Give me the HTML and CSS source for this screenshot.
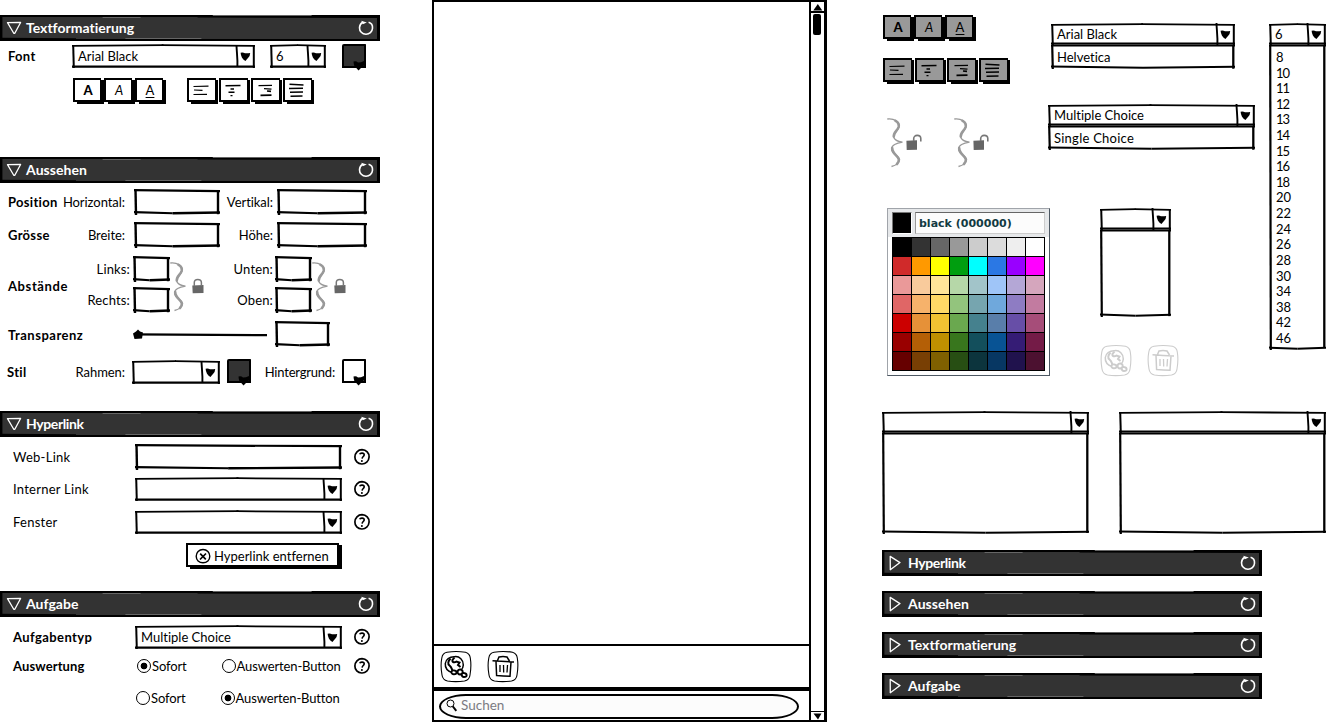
FILE: index.html
```html
<!DOCTYPE html>
<html lang="de">
<head>
<meta charset="utf-8">
<title>Textformatierung</title>
<link rel="stylesheet" href="styles.css">
</head>
<body>
<svg class="defs" aria-hidden="true">
  <symbol id="reload" viewBox="0 0 18 18"><path d="M11.600 3.300C14.200 4 15.700 6.500 15.500 9.300C15.300 12.900 12.300 15.400 8.900 15.300C5.200 15.200 2.400 12.300 2.500 8.700C2.600 6.200 3.900 4.300 5.800 3.300" fill="none" stroke="#fff" stroke-width="1.600"/><path d="M4.300 1.700L9.800 3.400L5.800 5.200Z" fill="#fff"/></symbol>
  <symbol id="open" viewBox="0 0 16 14"><path d="M1.500 1.600L14.600 1.500L8.800 12.200Q8.200 12.600 7.600 12Z" fill="none" stroke="#fff" stroke-width="1.300" stroke-linejoin="round"/></symbol>
  <symbol id="closed" viewBox="0 0 14 16"><path d="M2.200 1.400L12 7.600L2.300 14.700Z" fill="none" stroke="#fff" stroke-width="1.300" stroke-linejoin="round"/></symbol>
  <symbol id="drop" viewBox="0 0 20 24"><path d="M1.500 1C1.600 8 2.800 14 2.400 23" stroke="#000" stroke-width="1.900" fill="none"/><path d="M5.600 8.800Q8 8.300 10 9.200Q12.500 9.400 15.200 8.900Q15 12.200 13.200 13.800Q11.500 15.500 10.500 17Q8.500 16 7 13.800Q5.800 11.500 5.600 8.800Z"/></symbol>
  <symbol id="swatch-tip" viewBox="0 0 26 27"><path d="M11.500 17.500Q14 16.500 16 18.500Q19 18.500 22 17V21.500Q19.500 22.500 18.500 24.500L16.500 26.500L14.300 24Q11.800 23 11.500 17.500Z"/></symbol>
  <symbol id="help" viewBox="0 0 18 18"><path d="M9 1.700C13.200 1.800 16.300 4.800 16.100 9C15.800 13.200 12.600 16.200 8.700 16C4.700 15.900 1.800 12.900 1.900 8.900C2 4.900 5 1.700 9 1.700Z" fill="none" stroke="#000" stroke-width="1.700"/><path d="M6.700 6.300C7.300 4.600 11.200 4.600 11.200 6.800C11.200 8.500 9.300 8.600 9.100 10.700" fill="none" stroke="#000" stroke-width="1.600"/><circle cx="8.900" cy="12.900" r="1"/></symbol>
  <symbol id="remove" viewBox="0 0 18 18"><path d="M9 2.500C13 2.500 15.800 5.500 15.800 9.300C15.800 13 13 15.800 9 15.800C5 15.800 2.200 13 2.200 9.300C2.200 5.500 5 2.500 9 2.500Z" fill="none" stroke="#000" stroke-width="1.400"/><path d="M6.200 6.700L11.800 12.300M12 6.500L6 12.500" stroke="#000" stroke-width="1.700"/></symbol>
  <symbol id="brace" viewBox="0 0 16 50"><path d="M.3 1C7 .2 12.700 3.500 12 9C11 13 5.800 15 6.700 19C7.500 22.500 11 23.700 15.500 24.100C10 25 3.700 27 4.700 32C5.700 36 12.500 38 12.500 42C12 45.500 8.500 47.500 4.500 48.500" fill="none" stroke="#999" stroke-width="1.300"/><path d="M8.500 2.800C11 4 12.200 6.500 11.600 9C10.600 12.500 6.300 14.500 6.800 18.500M5.200 30C4.800 35.500 11 37.500 11.900 41.500C11.900 43.500 11 45 10 46" fill="none" stroke="#999" stroke-width="2.600" stroke-linecap="round"/></symbol>
  <symbol id="lock" viewBox="0 0 12 16"><path d="M.3 7.500L11.500 7V15L.7 15.300Z" fill="#666"/><path d="M2.300 8V4.500C2.300 .4 9.400 .4 9.400 4.500V8" fill="none" stroke="#777" stroke-width="1.500"/></symbol>
  <symbol id="unlock" viewBox="0 0 16 17"><path d="M.4 6.700L11 6.300V15.700L.7 16Z" fill="#666"/><path d="M7.700 7V4.800C7.500 .3 14.700 .3 14.800 4.600V7.500" fill="none" stroke="#777" stroke-width="1.600"/></symbol>
  <symbol id="left" viewBox="0 0 28 24"><path d="M6.500 8.500L21.500 8.200M7 12L15.500 12.300M6.500 16.500L20 16.300" stroke="#000" stroke-width="1.200"/></symbol>
  <symbol id="center" viewBox="0 0 28 24"><path d="M6.500 7.700L21.500 7.500M11.500 11L15 11M9.500 14.300L15.500 14.300M11.500 17.600L13.500 17.600" stroke="#000" stroke-width="1.400"/></symbol>
  <symbol id="right" viewBox="0 0 28 24"><path d="M7.500 7.600L21 7.300M13 10.600L20.500 11.200" stroke="#000" stroke-width="1.200"/><path d="M16 13L20 13.400M9.500 17.300L20.500 17.200" stroke="#000" stroke-width="1.700"/></symbol>
  <symbol id="justify" viewBox="0 0 28 24"><path d="M6.500 6.300L20.500 7M6 10.500L20 10.300M7 14.300L20 14M7.500 18.200L19.500 18" stroke="#000" stroke-width="1.400"/></symbol>
  <symbol id="globe" viewBox="0 0 32 33"><g fill="none" stroke="currentColor"><path d="M7 2.200Q16 .7 25.500 2.200Q29.800 3.500 30.300 8Q31.600 16 30 25Q29.500 30 24.500 31Q15.500 32.300 7.500 31Q2.700 30 2 25Q.3 16 1.800 8Q2.500 3 7 2.200Z" stroke-width="1.100"/><path d="M14.500 6.700C19.500 6 23.500 10 23.300 15C23.200 17 22.500 19 21 20M12 22.500C7.500 21 5 17.500 5.300 13.500C5.700 9.500 9.500 6.500 14.500 6.700" stroke-width="1.500"/><path d="M10.500 8.500C8 11 7.500 14 9.500 15.500C11.500 17 11.500 18.500 12.500 20.500M14.500 7.500L12.500 10C12 12.500 14.500 13 16.500 11.500L19.500 12.500L18 15L20.500 17" stroke-width="2"/><path d="M14.500 20.500C10.500 19.500 10.500 24.500 14 24.300C17 24.300 17.500 21 14.500 20.500ZM20.500 19.500C17 19 16.500 24.500 20 24.500C23.500 24.300 23.500 20 20.500 19.500ZM24 23C21 22.500 21 27 24 27C27.500 27 27.500 23.500 24 23Z" stroke-width="1.900"/></g></symbol>
  <symbol id="trash" viewBox="0 0 32 33"><g fill="none" stroke="currentColor"><path d="M7 2.200Q16 .7 25.500 2.200Q29.800 3.500 30.300 8Q31.600 16 30 25Q29.500 30 24.500 31Q15.500 32.300 7.500 31Q2.700 30 2 25Q.3 16 1.800 8Q2.500 3 7 2.200Z" stroke-width="1.100"/><path d="M5.500 10.800Q16 11.500 27 12M10.500 10.500L12 7Q16 6 20 7L22.500 11M9 11.500L9.600 25.500Q16 26 23 26.300L24 12" stroke-width="1.500"/><path d="M13 15V22M16.500 15L16.700 22.500M20.500 15L20 22.500" stroke-width="1.300"/></g></symbol>
  <symbol id="search" viewBox="0 0 12 14"><circle cx="4.500" cy="4.500" r="3.500" fill="none" stroke="#000"/><path d="M6.800 7.300L10.300 11.800" stroke="#000" stroke-width="1.900"/></symbol>
</svg>

<main class="board">
  <section class="properties">
    <header class="bar"><svg class="i-open"><use href="#open"/></svg><h2>Textformatierung</h2><svg class="i-reload"><use href="#reload"/></svg></header>
    <div class="row row-font"><label class="b">Font</label><div class="select w-font"><span>Arial Black</span><svg><use href="#drop"/></svg></div><div class="select w-size"><span>6</span><svg><use href="#drop"/></svg></div><div class="swatch dark"><svg><use href="#swatch-tip"/></svg></div></div>
    <div class="row row-format">
      <div class="group"><button class="fmt"><b>A</b></button><button class="fmt"><i>A</i></button><button class="fmt"><u>A</u></button></div>
      <div class="group"><button class="fmt al"><svg><use href="#left"/></svg></button><button class="fmt al"><svg><use href="#center"/></svg></button><button class="fmt al"><svg><use href="#right"/></svg></button><button class="fmt al"><svg><use href="#justify"/></svg></button></div>
    </div>

    <header class="bar gap-style"><svg class="i-open"><use href="#open"/></svg><h2 class="wide">Aussehen</h2><svg class="i-reload"><use href="#reload"/></svg></header>
    <div class="row pair first"><label class="b">Position</label><label class="r">Horizontal:</label><div class="input"></div><label class="r">Vertikal:</label><div class="input"></div></div>
    <div class="row pair"><label class="b">Grösse</label><label class="r">Breite:</label><div class="input"></div><label class="r">Höhe:</label><div class="input"></div></div>
    <div class="spacing"><label class="b">Abstände</label>
      <div class="stack lab"><label>Links:</label><label>Rechts:</label></div><div class="stack"><div class="input"></div><div class="input"></div></div><svg class="brace"><use href="#brace"/></svg><svg class="lock"><use href="#lock"/></svg>
      <div class="stack lab"><label>Unten:</label><label>Oben:</label></div><div class="stack"><div class="input"></div><div class="input"></div></div><svg class="brace"><use href="#brace"/></svg><svg class="lock"><use href="#lock"/></svg>
    </div>
    <div class="row row-alpha"><label class="b">Transparenz</label><svg class="slider"><path d="M1 13.300L134 14.200" stroke="#000" stroke-width="2.200"/><path d="M0 12.500L3 10.500L5 8.500L7 10.500L10 11.500L9 17.500L1.500 18Z"/></svg><div class="input"></div></div>
    <div class="row row-style"><label class="b">Stil</label><label class="r">Rahmen:</label><div class="select w-frame"><span></span><svg><use href="#drop"/></svg></div><div class="swatch dark"><svg><use href="#swatch-tip"/></svg></div><label class="r">Hintergrund:</label><div class="swatch"><svg><use href="#swatch-tip"/></svg></div></div>

    <header class="bar gap-link"><svg class="i-open"><use href="#open"/></svg><h2 class="tight">Hyperlink</h2><svg class="i-reload"><use href="#reload"/></svg></header>
    <div class="row field f1"><label class="sp">Web-Link</label><div class="input"></div><svg class="help"><use href="#help"/></svg></div>
    <div class="row field f2"><label class="sp">Interner Link</label><div class="select"><span></span><svg><use href="#drop"/></svg></div><svg class="help"><use href="#help"/></svg></div>
    <div class="row field f3"><label class="sp">Fenster</label><div class="select"><span></span><svg><use href="#drop"/></svg></div><svg class="help"><use href="#help"/></svg></div>
    <button class="remove"><svg><use href="#remove"/></svg>Hyperlink entfernen</button>

    <header class="bar gap-task"><svg class="i-open"><use href="#open"/></svg><h2>Aufgabe</h2><svg class="i-reload"><use href="#reload"/></svg></header>
    <div class="row field f4"><label class="b">Aufgabentyp</label><div class="select"><span>Multiple Choice</span><svg><use href="#drop"/></svg></div><svg class="help"><use href="#help"/></svg></div>
    <div class="row field f5"><label class="b">Auswertung</label><div class="radios"><label class="radio on">Sofort</label><label class="radio">Auswerten-Button</label></div><svg class="help"><use href="#help"/></svg></div>
    <div class="row field f6"><span></span><div class="radios shift"><label class="radio">Sofort</label><label class="radio on">Auswerten-Button</label></div></div>
  </section>

  <section class="canvas">
    <div class="stage">
      <div class="page"></div>
      <div class="tools"><svg><use href="#globe"/></svg><svg><use href="#trash"/></svg></div>
      <div class="footer"><div class="search"><svg><use href="#search"/></svg>Suchen</div></div>
    </div>
    <div class="scroll"><div class="cap"><svg class="tri"><path d="M4.800 0L9.300 6.500H.3Z"/></svg></div><div class="thumb"></div><div class="cap end"><svg class="tri"><path d="M.5 .5H8.500L5 6.500Z"/></svg></div></div>
  </section>

  <section class="library">
    <div class="upper">
      <div class="col-a">
        <div class="group"><button class="fmt off"><b>A</b></button><button class="fmt off"><i>A</i></button><button class="fmt off"><u>A</u></button></div>
        <div class="group g2"><button class="fmt al off"><svg><use href="#left"/></svg></button><button class="fmt al off"><svg><use href="#center"/></svg></button><button class="fmt al off"><svg><use href="#right"/></svg></button><button class="fmt al off"><svg><use href="#justify"/></svg></button></div>
        <div class="unlocked"><svg class="brace"><use href="#brace"/></svg><svg class="unlock"><use href="#unlock"/></svg><svg class="brace second"><use href="#brace"/></svg><svg class="unlock"><use href="#unlock"/></svg></div>
        <div class="picker">
          <div class="current"><div class="chip"></div><div class="name">black (000000)</div></div>
          <div class="grid">
            <i class="c00"></i><i class="c01"></i><i class="c02"></i><i class="c03"></i><i class="c04"></i><i class="c05"></i><i class="c06"></i><i class="c07"></i>
            <i class="c10"></i><i class="c11"></i><i class="c12"></i><i class="c13"></i><i class="c14"></i><i class="c15"></i><i class="c16"></i><i class="c17"></i>
            <i class="c20"></i><i class="c21"></i><i class="c22"></i><i class="c23"></i><i class="c24"></i><i class="c25"></i><i class="c26"></i><i class="c27"></i>
            <i class="c30"></i><i class="c31"></i><i class="c32"></i><i class="c33"></i><i class="c34"></i><i class="c35"></i><i class="c36"></i><i class="c37"></i>
            <i class="c40"></i><i class="c41"></i><i class="c42"></i><i class="c43"></i><i class="c44"></i><i class="c45"></i><i class="c46"></i><i class="c47"></i>
            <i class="c50"></i><i class="c51"></i><i class="c52"></i><i class="c53"></i><i class="c54"></i><i class="c55"></i><i class="c56"></i><i class="c57"></i>
            <i class="c60"></i><i class="c61"></i><i class="c62"></i><i class="c63"></i><i class="c64"></i><i class="c65"></i><i class="c66"></i><i class="c67"></i>
          </div>
        </div>
      </div>
      <div class="col-b">
        <div class="combo m-font"><div class="select"><span>Arial Black</span><svg><use href="#drop"/></svg></div><div class="menu">Helvetica</div></div>
        <div class="combo m-choice"><div class="select"><span>Multiple Choice</span><svg><use href="#drop"/></svg></div><div class="menu sp">Single Choice</div></div>
        <div class="combo m-frame"><div class="select"><span></span><svg><use href="#drop"/></svg></div><div class="menu"></div></div>
        <div class="faded"><svg><use href="#globe"/></svg><svg><use href="#trash"/></svg></div>
      </div>
      <div class="combo m-size"><div class="select"><span>6</span><svg><use href="#drop"/></svg></div>
        <ul class="menu"><li>8</li><li class="teen">10</li><li class="teen">11</li><li class="teen">12</li><li class="teen">13</li><li class="teen">14</li><li class="teen">15</li><li class="teen">16</li><li class="teen">18</li><li>20</li><li>22</li><li>24</li><li>26</li><li>28</li><li>30</li><li>34</li><li>38</li><li>42</li><li>46</li></ul></div>
    </div>
    <div class="wide-combos">
      <div class="combo"><div class="select"><span></span><svg><use href="#drop"/></svg></div><div class="menu"></div></div>
      <div class="combo"><div class="select"><span></span><svg><use href="#drop"/></svg></div><div class="menu"></div></div>
    </div>
    <div class="bars">
      <header class="bar"><svg class="i-closed"><use href="#closed"/></svg><h2 class="tight">Hyperlink</h2><svg class="i-reload"><use href="#reload"/></svg></header>
      <header class="bar"><svg class="i-closed"><use href="#closed"/></svg><h2 class="wide">Aussehen</h2><svg class="i-reload"><use href="#reload"/></svg></header>
      <header class="bar"><svg class="i-closed"><use href="#closed"/></svg><h2>Textformatierung</h2><svg class="i-reload"><use href="#reload"/></svg></header>
      <header class="bar"><svg class="i-closed"><use href="#closed"/></svg><h2>Aufgabe</h2><svg class="i-reload"><use href="#reload"/></svg></header>
    </div>
  </section>
</main>
</body>
</html>
```
FILE: styles.css
```css
* { box-sizing: border-box; }
body { margin: 0; background: #fff; color: #000; font: 13px/16px Lato, sans-serif; font-variant-ligatures: none; overflow: hidden; }
svg { display: block; flex: none; }
.defs { width: 0; height: 0; position: absolute; }
button { padding: 0; border: 0; background: none; color: inherit; font: inherit; }
h2, ul { margin: 0; padding: 0; }
.board { display: flex; width: 1326px; height: 723px; }
.properties { width: 380px; padding-top: 15px; flex: none; }
.library { width: 444px; margin-left: 55px; flex: none; }

/* sketched outlines: each edge is built from slightly offset strokes */
.bar, .input, .select, .menu { background: center / 100% 100% no-repeat; }
.bar {
  display: flex; align-items: center; height: 26px; width: 380px; padding: 0 5px 0 6px; color: #fff;
  background-image: url("data:image/svg+xml,%3Csvg xmlns='http://www.w3.org/2000/svg'%3E%3Crect width='100%25' height='100%25' fill='%23333'/%3E%3Cg stroke='%23000'%3E%3Cpath d='M1.2 0V26' stroke-width='2.400'/%3E%3Cline x1='0' x2='100%25' y1='1' y2='1' stroke-width='2'/%3E%3Cline x1='52%25' x2='100%25' y1='1.800' y2='2.200' stroke-width='1.500'/%3E%3Cline x1='0' x2='100%25' y1='25' y2='25' stroke-width='2'/%3E%3Cline x1='0' x2='20%25' y1='23.500' y2='24' stroke-width='1.500'/%3E%3Cline x1='99.600%25' x2='99.600%25' y1='0' y2='26' stroke-width='3'/%3E%3C/g%3E%3Cg stroke='%23666' stroke-width='1'%3E%3Cline x1='27%25' x2='37%25' y1='2.500' y2='2.500'/%3E%3Cline x1='33%25' x2='53%25' y1='23.500' y2='23.500'/%3E%3Cline x1='56%25' x2='82%25' y1='.5' y2='.5'/%3E%3C/g%3E%3C/svg%3E");
}
.bar h2 { flex: 1; font-size: 14px; line-height: 18px; font-weight: bold; }
.bar h2.wide { letter-spacing: .07px; }
.bar h2.tight { letter-spacing: -.39px; }
.i-open { width: 16px; height: 14px; margin-right: 4px; }
.i-closed { width: 14px; height: 16px; margin-right: 6px; }
.i-reload { width: 18px; height: 18px; }

.input {
  height: 26px;
  background-image: url("data:image/svg+xml,%3Csvg xmlns='http://www.w3.org/2000/svg'%3E%3Cg stroke='%23000'%3E%3Cline x1='1.500' x2='2' y1='0' y2='100%25' stroke-width='2.400'/%3E%3Cline x1='0' x2='100%25' y1='1.200' y2='2.200' stroke-width='2.200'/%3E%3Cg transform='translate(0 -2)'%3E%3Cline x1='0' x2='45%25' y1='97%25' y2='101%25' stroke-width='2.200'/%3E%3Cline x1='45%25' x2='100%25' y1='101%25' y2='98%25' stroke-width='2.300'/%3E%3C/g%3E%3Cg transform='translate(-2 0)'%3E%3Cline x1='100%25' x2='100%25' y1='1' y2='97%25' stroke-width='2.400'/%3E%3C/g%3E%3C/g%3E%3C/svg%3E");
}
.select {
  display: flex; height: 24px; padding-left: 6px; align-items: flex-start;
  background-image: url("data:image/svg+xml,%3Csvg xmlns='http://www.w3.org/2000/svg'%3E%3Cg stroke='%23000' stroke-width='2'%3E%3Cline x1='1.200' x2='1.800' y1='1' y2='100%25'/%3E%3Cline x1='0' x2='50%25' y1='1.900' y2='1.200' stroke-width='1.800'/%3E%3Cline x1='49%25' x2='100%25' y1='1.200' y2='1.800' stroke-width='1.800'/%3E%3Cg transform='translate(0 -1.300)'%3E%3Cline x1='0' x2='100%25' y1='100%25' y2='100%25' stroke-width='2.200'/%3E%3C/g%3E%3Cg transform='translate(-1.200 0)'%3E%3Cline x1='100%25' x2='100%25' y1='1' y2='100%25' stroke-width='2'/%3E%3C/g%3E%3C/g%3E%3C/svg%3E");
}
.select span { flex: 1; padding-top: 4px; }
.select svg { width: 20px; height: 24px; }
.swatch {
  width: 25px; height: 27px; border-radius: 2px;
  background: linear-gradient(#fff, #fff) 2px 2px / 20px 20px no-repeat, linear-gradient(#000, #000) 0 0 / 24px 24px no-repeat;
}
.swatch.dark { background-image: linear-gradient(#333, #333), linear-gradient(#000, #000); }
.swatch svg { width: 26px; height: 27px; }

.row { display: flex; align-items: center; height: 26px; white-space: nowrap; }
.b { font-weight: bold; letter-spacing: .3px; }
.r { text-align: right; letter-spacing: -.05px; }
.sp { letter-spacing: .25px; }
.row-font { height: 24px; margin-top: 3px; padding-left: 8px; align-items: flex-start; }
.row-font > label { width: 64px; padding-top: 4px; }
.w-font { width: 183px; }
.w-size { width: 56px; margin: 0 16px 0 15px; }
.row-format { margin-top: 10px; padding-left: 73px; gap: 21px; align-items: flex-start; }

.group { display: flex; }
.fmt {
  width: 31px; height: 26px; padding: 0 1px 3px 0; display: flex; align-items: center; justify-content: center;
  background: linear-gradient(#fff, #fff) 2px 2px / 25px 20px no-repeat, linear-gradient(#000, #000) 0 0 / 28px 24px no-repeat, linear-gradient(#000, #000) 4px 2px / 27px 24px no-repeat;
}
.fmt.al { width: 32px; padding-right: 4px; background-size: 26px 20px, 29px 24px, 27px 24px; }
.fmt.off { background-image: linear-gradient(#999, #999), linear-gradient(#000, #000), linear-gradient(#000, #000); }
.fmt svg { width: 28px; height: 24px; margin-top: 1px; }
.fmt b { font-weight: 900; }
.fmt u { text-underline-offset: 2px; }

.gap-style { margin-top: 53px; }
.pair { display: grid; grid-template-columns: 52px 65px 9px 86px 53px 4px 90px; padding-left: 8px; margin-top: 7px; }
.pair.first { margin-top: 6px; }
.pair .input:nth-child(3) { grid-column: 4; }
.pair .input:nth-child(5) { grid-column: 7; }

.spacing { display: flex; height: 58px; margin-top: 8px; padding-left: 8px; align-items: flex-start; }
.spacing > .b { width: 77px; padding-top: 22px; letter-spacing: .6px; }
.stack { display: flex; flex-direction: column; gap: 5px; width: 37px; }
.stack.lab { width: 45px; gap: 15px; padding-top: 5px; margin-right: 3px; text-align: right; letter-spacing: .15px; }
.lock + .stack.lab { margin-left: 24px; margin-right: 2px; }
.brace { width: 16px; height: 50px; margin-top: 6px; }
.lock { width: 12px; height: 16px; margin: 22px 0 0 6px; }

.row-alpha { margin-top: 7px; padding-left: 8px; }
.row-alpha .b { width: 125px; padding-top: 1px; letter-spacing: .5px; }
.slider { width: 142px; height: 26px; }
.row-alpha .input { width: 55px; }
.row-style { height: 25px; margin-top: 12px; padding-left: 7px; align-items: flex-start; }
.row-style label { padding-top: 5px; }
.row-style .b { width: 50px; }
.row-style .r { width: 68px; }
.w-frame { width: 88px; margin: 1px 7px 0; }
.row-style .swatch ~ .r { width: 83px; margin-right: 7px; letter-spacing: -.2px; }

.gap-link { margin-top: 27px; }
.gap-task { margin-top: 22px; }
.field { padding-left: 13px; }
.field > :first-child { width: 122px; }
.field > .b { letter-spacing: .4px; }
.field > .input, .field > .select { width: 207px; margin-right: 11px; }
.help { width: 18px; height: 18px; }
.f1 { margin-top: 7px; }
.f2 { height: 24px; margin-top: 7px; }
.f3 { height: 24px; margin-top: 9px; }
.f4 { height: 24px; margin-top: 8px; }
.field.f5 > .b { letter-spacing: .1px; }
.f5 { height: 18px; margin-top: 8px; }
.f6 { height: 18px; margin-top: 14px; }
.remove {
  display: flex; align-items: center; gap: 2px; width: 156px; height: 26px; margin: 9px 0 0 186px; padding: 0 0 1px 8px;
  background: linear-gradient(#fff, #fff) 2px 2px / 149px 20px no-repeat, linear-gradient(#000, #000) 0 0 / 153px 24px no-repeat, linear-gradient(#000, #000) 4px 2px / 152px 24px no-repeat;
}
.remove svg { width: 18px; height: 18px; }
.radios { display: flex; width: 218px; padding-left: 2px; gap: 35px; }
.radios.shift { padding-left: 1px; }
.radio { display: flex; align-items: center; gap: 1px; letter-spacing: -.13px; }
.radio::before { content: ""; width: 12px; height: 12px; margin-top: -1px; border: 1px solid #000; border-radius: 50%; }
.radio.on::before { background: radial-gradient(circle, #000 3px, #fff 3.700px); }

.canvas { display: flex; width: 395px; height: 722px; margin-left: 52px; flex: none; border: solid #000; border-width: 2px 3px 2px 0; }
.stage { width: 379px; display: flex; flex-direction: column; border-left: 2px solid #000; border-right: 2px solid #000; }
.page { flex: 1; }
.tools { height: 43px; border-top: 2px solid #000; display: flex; gap: 15px; padding: 4px 0 0 6px; color: #000; }
.tools svg, .faded svg { width: 32px; height: 33px; }
.footer { height: 33px; border-top: 4px solid #000; padding: 3px 0 0 5px; }
.search { display: flex; align-items: center; width: 360px; height: 25px; padding: 0 0 4px 5px; gap: 3px; border: 2px solid #000; border-radius: 28px / 13px; background: #fcfcfc; color: #7b7b82; font-size: 13.500px; line-height: 18px; }
.search svg { width: 12px; height: 14px; margin-top: 3px; }
.scroll { flex: 1; display: flex; flex-direction: column; }
.cap { height: 11px; border-bottom: 2px solid #000; display: flex; justify-content: center; padding-top: 2px; }
.cap.end { margin-top: auto; height: 9px; border-bottom: 0; border-top: 1px solid #000; padding-top: 1px; }
.tri { width: 10px; height: 7px; }
.thumb { width: 8px; height: 21px; margin: 1px 0 0 2px; background: #000; border-radius: 2px; }

.upper { display: flex; height: 411px; }
.col-a { width: 166px; padding: 15px 0 0 1px; flex: none; }
.g2 { margin-top: 17px; }
.unlocked { display: flex; margin: 34px 0 0 4px; }
.unlocked .brace { margin-top: 0; }
.unlocked .second { margin-left: 32px; }
.unlock { width: 16px; height: 17px; margin: 16px 0 0 3px; }
.picker { width: 163px; height: 168px; margin: 40px 0 0 4px; border: 1px solid #a0a4aa; border-right-color: #4d5863; border-bottom-color: #4d5863; padding: 3px 4px; background: linear-gradient(#e6e8ea 28px, #fff 28px); }
.current { display: flex; gap: 3px; }
.chip { width: 20px; height: 22px; background: #000; border: 1px solid #777; border-right-color: #fff; border-bottom-color: #fff; }
.name { width: 130px; height: 22px; padding-left: 3px; border: 1px solid #666; border-color: #666 #ccc #ccc #999; background: #fcfcfc; color: #123a42; font: bold 11px/21px "DejaVu Sans", sans-serif; letter-spacing: -.55px; letter-spacing: 0; }
.grid { display: grid; grid-template-columns: repeat(8, 18px); grid-auto-rows: 18px; gap: 1px; width: 153px; margin-top: 3px; padding: 1px; background: #000; }
.c00{background:#000}.c01{background:#333}.c02{background:#666}.c03{background:#999}.c04{background:#ccc}.c05{background:#dcdcdc}.c06{background:#eee}.c07{background:#fff}
.c10{background:#d02a2a}.c11{background:#f90}.c12{background:#ff0}.c13{background:#009e0f}.c14{background:#0ff}.c15{background:#2b78e4}.c16{background:#90f}.c17{background:#f0f}
.c20{background:#ea9999}.c21{background:#f9cb9c}.c22{background:#ffe599}.c23{background:#b6d7a8}.c24{background:#a2c4c9}.c25{background:#9fc5f8}.c26{background:#b4a7d6}.c27{background:#d5a6bd}
.c30{background:#e06666}.c31{background:#f6b26b}.c32{background:#ffd966}.c33{background:#93c47d}.c34{background:#76a5af}.c35{background:#6fa8dc}.c36{background:#8e7cc3}.c37{background:#c27ba0}
.c40{background:#c00}.c41{background:#e69138}.c42{background:#f1c232}.c43{background:#6aa84f}.c44{background:#45818e}.c45{background:#597eaa}.c46{background:#674ea7}.c47{background:#a64d79}
.c50{background:#900}.c51{background:#b45f06}.c52{background:#bf9000}.c53{background:#38761d}.c54{background:#134f5c}.c55{background:#085394}.c56{background:#351c75}.c57{background:#741b47}
.c60{background:#600}.c61{background:#783f04}.c62{background:#7f6000}.c63{background:#274e13}.c64{background:#0c343d}.c65{background:#073763}.c66{background:#20124d}.c67{background:#4c1130}

.col-b { width: 207px; padding-top: 23px; flex: none; }
.combo .select { height: 22px; }
.combo .select span { padding-top: 3px; }
.combo .select svg { height: 24px; margin-top: -1px; }
.menu {
  padding: 4px 0 0 6px; height: 24px;
  background-image: url("data:image/svg+xml,%3Csvg xmlns='http://www.w3.org/2000/svg'%3E%3Cg stroke='%23000' stroke-width='2.200'%3E%3Cline x1='1.200' x2='1.800' y1='0' y2='100%25'/%3E%3Cline x1='0' x2='100%25' y1='.5' y2='.5'/%3E%3Cg transform='translate(0 -2.200)'%3E%3Cg stroke-width='2'%3E%3Csvg overflow='visible' y='100%25'%3E%3Cline x1='0' x2='50%25' y1='-.2' y2='.9'/%3E%3Cline x1='50%25' x2='100%25' y1='.9' y2='0'/%3E%3C/svg%3E%3C/g%3E%3C/g%3E%3Cg transform='translate(-1.700 0)'%3E%3Cline x1='100%25' x2='100%25' y1='0' y2='99%25' stroke-width='2.300'/%3E%3C/g%3E%3C/g%3E%3C/svg%3E");
}
.m-font { width: 184px; margin-left: 3px; }
.m-choice { margin-top: 35px; width: 207px; }
.m-frame { margin: 58px 0 0 52px; width: 71px; }
.m-frame .menu { height: 87px; }
.m-size { width: 57px; margin: 23px 0 0 14px; flex: none; }
.m-size .menu { height: 305px; padding: 5px 0 0 7px; list-style: none; line-height: 15.610px; }
.teen { letter-spacing: -1px; }
.faded { display: flex; gap: 15px; margin: 27px 0 0 52px; color: #ccc; }
.wide-combos { display: flex; gap: 30px; height: 139px; }
.wide-combos .combo { width: 207px; }
.wide-combos .menu { height: 101px; }
.bars { display: flex; flex-direction: column; gap: 15px; }
```
